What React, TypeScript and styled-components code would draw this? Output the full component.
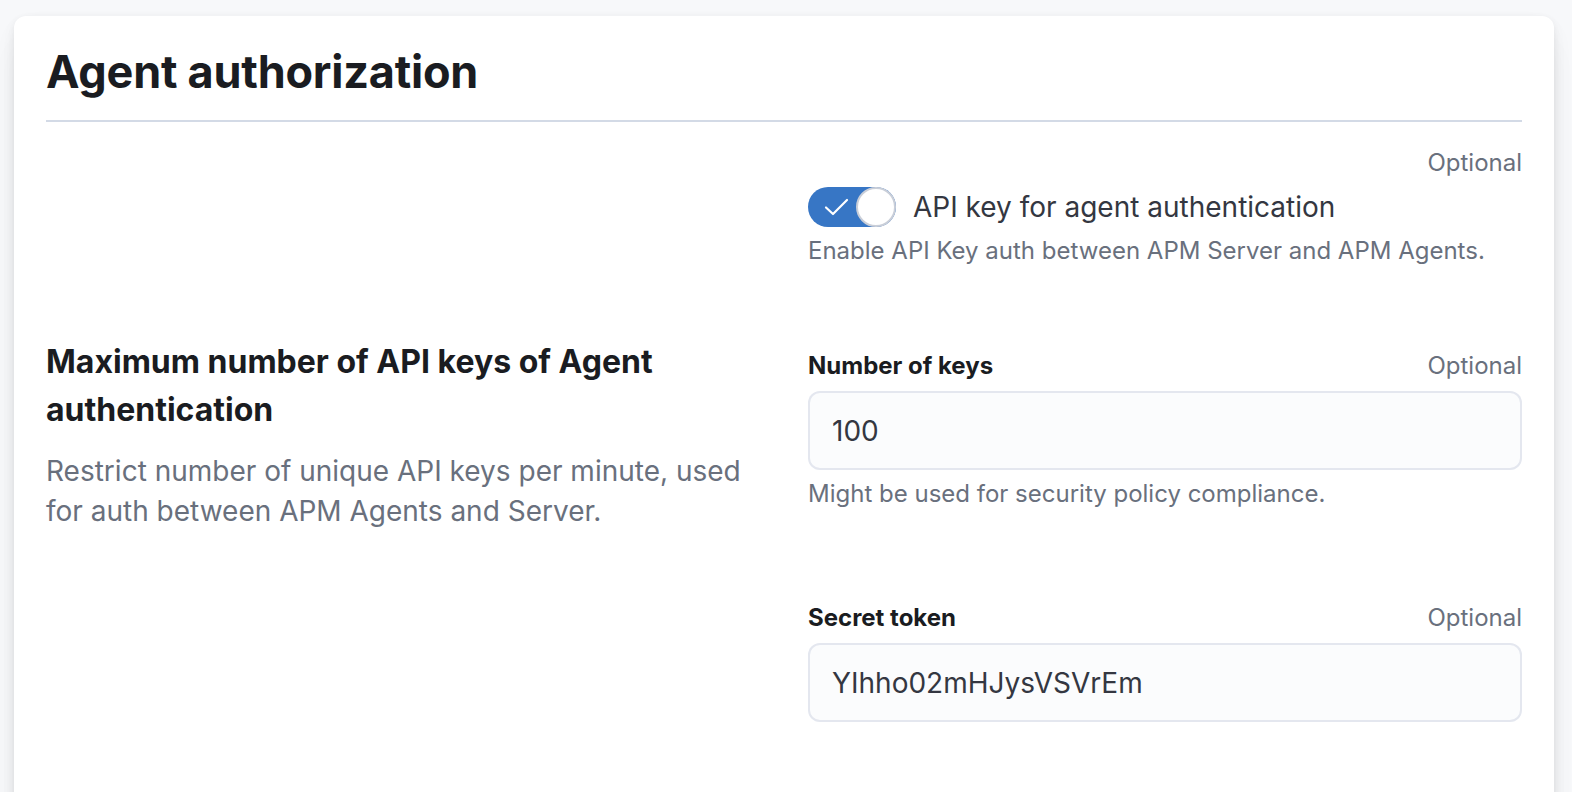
import { FC } from 'react';
import styled, { createGlobalStyle } from 'styled-components';

const GlobalStyle = createGlobalStyle`
  html, body {
    margin: 0;
    padding: 0;
    overflow: hidden;
    background: #f7f8fa;
    font-family: Inter, "Noto Sans", sans-serif;
    -webkit-font-smoothing: antialiased;
  }
`;

const Page = styled.div`
  padding: 16px 18px 0 14px;
  height: 792px;
  box-sizing: border-box;
`;

const Panel = styled.section`
  background: #fff;
  border-radius: 12px;
  padding: 32px 32px 120px;
  min-height: 900px;
  box-sizing: border-box;
  box-shadow: 0 2px 8px -2px rgba(0, 0, 0, 0.08), 0 5px 16px -2px rgba(0, 0, 0, 0.06),
    0 11px 24px -2px rgba(0, 0, 0, 0.05), 0 30px 30px -2px rgba(0, 0, 0, 0.04);
`;

const Title = styled.h2`
  margin: 0;
  font-size: 45px;
  line-height: 48px;
  font-weight: 700;
  color: #1a1c21;
  letter-spacing: -0.005em;
`;

const Divider = styled.hr`
  border: none;
  height: 2px;
  background: #d3dae6;
  margin: 24px 0 24px;
`;

const Group = styled.div<{ $gapTop?: number }>`
  display: grid;
  grid-template-columns: 1fr 1fr;
  column-gap: 48px;
  margin-top: ${(p) => p.$gapTop ?? 0}px;
`;

const Describe = styled.div`
  h3 {
    margin: 0 0 17px;
    font-size: 32px;
    line-height: 48px;
    font-weight: 700;
    color: #1a1c21;
  }
  p {
    margin: 0;
    font-size: 28px;
    line-height: 40px;
    color: #69707d;
  }
`;

const Fields = styled.div<{ $padTop?: number }>`
  padding-top: ${(p) => p.$padTop ?? 0}px;
`;

const FormRow = styled.div<{ $gapTop?: number }>`
  margin-top: ${(p) => p.$gapTop ?? 0}px;
`;

const LabelRow = styled.div`
  display: flex;
  justify-content: space-between;
  align-items: center;
  height: 32px;
  margin-bottom: 10px;
  font-size: 24px;
`;

const Label = styled.label`
  font-weight: 650;
  color: #1a1c21;
`;

const Optional = styled.span`
  color: #69707d;
  margin-left: auto;
`;

const Input = styled.input`
  display: block;
  width: 100%;
  box-sizing: border-box;
  height: 79px;
  padding: 0 24px;
  border: none;
  border-radius: 12px;
  background: #fbfcfd;
  box-shadow: inset 0 0 0 2px #e4e7ef;
  font-family: inherit;
  font-size: 28px;
  color: #343741;
  outline: none;
`;

const Help = styled.div`
  margin-top: 8px;
  font-size: 24px;
  line-height: 32px;
  color: #69707d;
`;

const SwitchRow = styled.label`
  display: flex;
  align-items: center;
  gap: 17px;
  font-size: 28px;
  color: #343741;
  height: 40px;
  margin-top: -1px;
`;

const Track = styled.span<{ $on: boolean }>`
  position: relative;
  display: inline-flex;
  align-items: center;
  width: 88px;
  height: 40px;
  border-radius: 20px;
  background: ${(p) => (p.$on ? '#3776c5' : '#98a2b3')};
  flex-shrink: 0;
`;

const Thumb = styled.span`
  position: absolute;
  right: 0;
  top: 0;
  width: 40px;
  height: 40px;
  border-radius: 50%;
  box-sizing: border-box;
  background: #fff;
  border: 2px solid #c9ced8;
`;

const Switch: FC<{ on: boolean }> = ({ on }) => (
  <Track $on={on}>
    <svg width="26" height="20" viewBox="0 0 26 20" style={{ marginLeft: 16 }}>
      <path d="M2 10.5 L9 17 L23 3" fill="none" stroke="#fff" strokeWidth="2.2" strokeLinecap="round" strokeLinejoin="round" />
    </svg>
    <Thumb />
  </Track>
);

export default function App() {
  return (
    <>
      <GlobalStyle />
      <Page>
        <Panel>
          <Title>Agent authorization</Title>
          <Divider />
          <Group>
            <div />
            <Fields>
              <FormRow>
                <LabelRow>
                  <Optional>Optional</Optional>
                </LabelRow>
                <SwitchRow>
                  <Switch on />
                  API key for agent authentication
                </SwitchRow>
                <Help>Enable API Key auth between APM Server and APM Agents.</Help>
              </FormRow>
            </Fields>
          </Group>
          <Group $gapTop={71}>
            <Describe>
              <h3>Maximum number of API keys of Agent authentication</h3>
              <p>Restrict number of unique API keys per minute, used for auth between APM Agents and Server.</p>
            </Describe>
            <Fields $padTop={11}>
              <FormRow>
                <LabelRow>
                  <Label>Number of keys</Label>
                  <Optional>Optional</Optional>
                </LabelRow>
                <Input defaultValue="100" />
                <Help>Might be used for security policy compliance.</Help>
              </FormRow>
              <FormRow $gapTop={91}>
                <LabelRow>
                  <Label>Secret token</Label>
                  <Optional>Optional</Optional>
                </LabelRow>
                <Input defaultValue="YIhho02mHJysVSVrEm" />
              </FormRow>
            </Fields>
          </Group>
        </Panel>
      </Page>
    </>
  );
}
